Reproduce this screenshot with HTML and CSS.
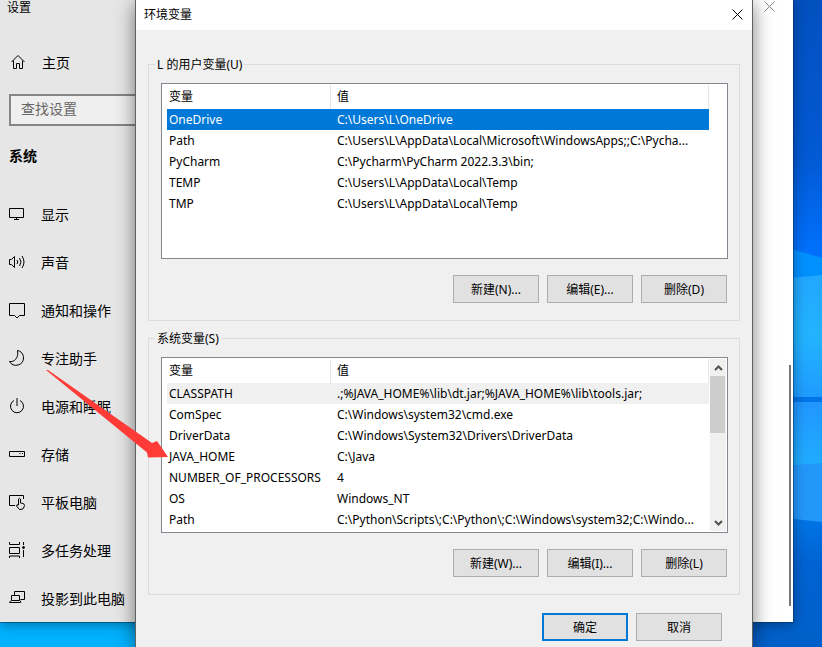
FILE: index.html
```
<!DOCTYPE html>
<html lang="zh-CN">
<head>
  <meta charset="UTF-8">
  <title>环境变量</title>
  <link rel="stylesheet" href="styles.css">
</head>
<body>
  <svg class="wallpaper" viewBox="0 0 822 647" preserveAspectRatio="xMaxYMin slice" aria-hidden="true">
    <defs>
      <linearGradient id="sky" x1="0" y1="0" x2="0" y2="1">
        <stop offset="0" stop-color="#0350bf"/>
        <stop offset=".6" stop-color="#0259d3"/>
        <stop offset="1" stop-color="#0072ff"/>
      </linearGradient>
      <linearGradient id="pane" x1="0" y1="0" x2="0" y2="1">
        <stop offset="0" stop-color="#22a6ff"/>
        <stop offset=".5" stop-color="#22b3ff"/>
        <stop offset="1" stop-color="#1f9bff"/>
      </linearGradient>
      <linearGradient id="pane2" x1="0" y1="0" x2="0" y2="1">
        <stop offset="0" stop-color="#2196ff"/>
        <stop offset="1" stop-color="#1fadff"/>
      </linearGradient>
      <linearGradient id="floor" x1="0" y1="0" x2="0" y2="1">
        <stop offset="0" stop-color="#0079ea"/>
        <stop offset=".4" stop-color="#0062d2"/>
        <stop offset="1" stop-color="#0060c9"/>
      </linearGradient>
    </defs>
    <rect width="822" height="260" fill="url(#sky)"/>
    <path d="M700 222L822 258V290H700z" fill="#0091ff"/>
    <path d="M700 286L822 275V397H700z" fill="url(#pane)"/>
    <rect y="397" width="822" height="5" fill="#0074e8"/>
    <rect x="700" y="402" width="122" height="66" fill="url(#pane2)"/>
    <path d="M700 472L822 463V530H700z" fill="#2497fb"/>
    <path d="M700 509L822 522V647H700z" fill="url(#floor)"/>
    <rect y="402" width="700" height="245" fill="#00b2ff"/>
  </svg>

  <div class="settings">
    <aside>
      <h1>设置</h1>
      <a class="home" href="#">
        <svg viewBox="0 0 18 18"><path d="M2.500 9L9 2.500l6.500 6.500M4.500 7.500v8h3v-5h3v5h3v-8"/></svg>
        主页
      </a>
      <input type="text" placeholder="查找设置" aria-label="查找设置">
      <h2>系统</h2>
      <nav>
        <a href="#"><svg viewBox="0 0 18 18"><path d="M1.500 3.500h14v9h-14zM8.500 12.500v2M6 14.500h5"/></svg>显示</a>
        <a href="#"><svg viewBox="0 0 18 18"><path d="M1.500 6.500h2l3-3v11l-3-3h-2zM9 7q1.500 2 0 4M11.500 5q3 4 0 8M14 3q4 6 0 12"/></svg>声音</a>
        <a href="#"><svg viewBox="0 0 18 18"><path d="M1.500 2.500h15v12h-5L9 17l-2.500-2.500h-5z"/></svg>通知和操作</a>
        <a href="#"><svg viewBox="0 0 18 18"><path d="M9.500 1.500C13 2 15.500 5 15.500 9a7.500 7.500 0 0 1-14 3.500C6 13.500 11 9 9.500 1.500z"/></svg>专注助手</a>
        <a href="#"><svg viewBox="0 0 18 18"><path d="M6 3.500a6.500 6.500 0 1 0 6 0M9 1v8"/></svg>电源和睡眠</a>
        <a href="#"><svg viewBox="0 0 18 18"><path d="M1.500 6.500h15v5h-15zM11.500 8.500h1M14 8.500h1"/></svg>存储</a>
        <a href="#"><svg viewBox="0 0 18 18"><path d="M7 12.500H1.500v-10h14V6M10.500 12V6q1-1.500 2 0v4l2.500.5q1.500.500 1.500 2-.5 4-3.500 4h-1.500L8.500 13q0-2 2-1"/></svg>平板电脑</a>
        <a href="#"><svg viewBox="0 0 18 18"><path d="M1.500 1v2.500h10V1M1.500 6.500h10v6h-10zM1.500 17v-2h10v2M15.500 1v3M15.500 9v7"/><circle cx="15.500" cy="6.500" r="1" fill="currentColor"/></svg>多任务处理</a>
        <a href="#"><svg viewBox="0 0 18 18"><path d="M6.500 6V2.500h10v8h-4M3.500 6.500h8v5h-8zM1.500 13.500h11M3 11.500l-1.500 2M12 11.500l1 2"/></svg>投影到此电脑</a>
      </nav>
    </aside>
    <main>
      <button class="close" aria-label="关闭设置"><svg viewBox="0 0 11 11"><path d="M.5.5l10 10M10.500.5l-10 10"/></svg></button>
      <div class="thumb"></div>
    </main>
  </div>

  <div class="dialog" role="dialog" aria-labelledby="title">
    <header>
      <span id="title">环境变量</span>
      <button class="close" aria-label="关闭"><svg viewBox="0 0 11 11"><path d="M.5.5l10 10M10.500.5l-10 10"/></svg></button>
    </header>

    <form>
      <fieldset>
        <legend>L 的用户变量(U)</legend>
        <div class="list">
          <div class="view">
            <table>
              <thead>
                <tr><th>变量</th><th>值</th></tr>
              </thead>
              <tbody>
                <tr class="selected"><td>OneDrive</td><td>C:\Users\L\OneDrive</td></tr>
                <tr><td>Path</td><td>C:\Users\L\AppData\Local\Microsoft\WindowsApps;;C:\Pycha...</td></tr>
                <tr><td>PyCharm</td><td>C:\Pycharm\PyCharm 2022.3.3\bin;</td></tr>
                <tr><td>TEMP</td><td>C:\Users\L\AppData\Local\Temp</td></tr>
                <tr><td>TMP</td><td>C:\Users\L\AppData\Local\Temp</td></tr>
              </tbody>
            </table>
          </div>
        </div>
        <div class="buttons">
          <button type="button">新建(N)...</button>
          <button type="button">编辑(E)...</button>
          <button type="button">删除(D)</button>
        </div>
      </fieldset>

      <fieldset>
        <legend>系统变量(S)</legend>
        <div class="list">
          <div class="view">
            <table>
              <thead>
                <tr><th>变量</th><th>值</th></tr>
              </thead>
              <tbody>
                <tr class="marked"><td>CLASSPATH</td><td>.;%JAVA_HOME%\lib\dt.jar;%JAVA_HOME%\lib\tools.jar;</td></tr>
                <tr><td>ComSpec</td><td>C:\Windows\system32\cmd.exe</td></tr>
                <tr><td>DriverData</td><td>C:\Windows\System32\Drivers\DriverData</td></tr>
                <tr><td>JAVA_HOME</td><td>C:\Java</td></tr>
                <tr><td>NUMBER_OF_PROCESSORS</td><td>4</td></tr>
                <tr><td>OS</td><td>Windows_NT</td></tr>
                <tr><td>Path</td><td>C:\Python\Scripts\;C:\Python\;C:\Windows\system32;C:\Windo...</td></tr>
              </tbody>
            </table>
          </div>
          <div class="scrollbar">
            <button type="button" aria-label="向上滚动"><svg viewBox="0 0 9 6"><path d="M1 5l3.500-3.500L8 5"/></svg></button>
            <div class="track"></div>
            <button type="button" aria-label="向下滚动"><svg viewBox="0 0 9 6"><path d="M1 1l3.500 3.500L8 1"/></svg></button>
          </div>
        </div>
        <div class="buttons">
          <button type="button">新建(W)...</button>
          <button type="button">编辑(I)...</button>
          <button type="button">删除(L)</button>
        </div>
      </fieldset>

      <div class="buttons actions">
        <button type="submit" class="default">确定</button>
        <button type="button">取消</button>
      </div>
    </form>
  </div>

  <svg class="arrow" viewBox="0 0 124 90" aria-hidden="true">
    <path d="M0 0l2 0L106 73l5-2 11 16-20 .5-1-5z"/>
  </svg>
</body>
</html>
```
FILE: styles.css
```
* {
  box-sizing: border-box;
  margin: 0;
  padding: 0;
}
html, body {
  height: 100%;
}
body {
  position: relative;
  overflow: hidden;
  font-family: "Noto Sans", "Noto Sans CJK SC", sans-serif;
  font-size: 12px;
  color: #000;
  background: #0060c9;
}
svg {
  display: block;
  fill: none;
  stroke: currentColor;
}
.wallpaper {
  position: absolute;
  width: 100%;
  height: 100%;
  stroke: none;
}

/* settings window */
.settings {
  position: absolute;
  top: 0;
  right: 29px;
  bottom: 25px;
  left: 0;
  display: flex;
  background: #fff;
  box-shadow: 0 0 0 1px rgba(0, 50, 90, .5), 0 2px 12px rgba(0, 0, 0, .4);
}
aside {
  flex: 0 0 320px;
  background: #e6e6e6;
  font-size: 14px;
}
aside h1 {
  height: 38px;
  padding-left: 7px;
  font-size: 12px;
  font-weight: normal;
  line-height: 16px;
}
aside a {
  display: flex;
  align-items: center;
  gap: 15px;
  height: 48px;
  padding-left: 8px;
  color: #000;
  text-decoration: none;
}
aside a svg {
  width: 18px;
  height: 18px;
}
aside a.home {
  padding-left: 9px;
}
aside input {
  display: block;
  width: 300px;
  height: 32px;
  margin: 8px 0 0 9px;
  padding: 0 10px 3px;
  border: 2px solid #868686;
  background: #efefef;
  font: inherit;
}
aside input::placeholder {
  color: #666;
}
aside h2 {
  height: 64px;
  padding-left: 9px;
  font-size: 14px;
  line-height: 60px;
}
main {
  flex: 1;
  display: flex;
  flex-direction: column;
  justify-content: space-between;
  align-items: flex-end;
  padding: 0 2px 16px 0;
}
.close {
  border: 0;
  background: none;
}
.close svg {
  width: 11px;
  height: 11px;
}
main .close {
  padding: 1px 16px;
  color: #888;
}
.thumb {
  width: 2px;
  height: 241px;
  background: #767676;
}

/* environment variables dialog */
.dialog {
  position: absolute;
  top: 0;
  right: 69px;
  left: 135px;
  min-height: 100%;
  border: solid #5f6265;
  border-width: 0 1px;
  background: #f0f0f0;
  box-shadow: 0 4px 18px rgba(0, 0, 0, .5);
}
header {
  display: flex;
  align-items: center;
  justify-content: space-between;
  height: 30px;
  padding: 0 9px 2px 8px;
  background: #fff;
}
form {
  padding: 25px 12px 6px;
}
fieldset {
  min-width: 0;
  margin-bottom: 8px;
  padding: 10px 11px 17px 12px;
  border: 1px solid #dcdcdc;
}
legend {
  padding: 1px 2px 0;
  margin-left: -6px;
  line-height: 17px;
}
.list {
  display: flex;
  height: 176px;
  padding: 1px 1px 0 5px;
  border: 1px solid #828790;
  background: #fff;
}
.view {
  flex: 1;
  min-width: 0;
  padding-right: 17px;
}
.view:not(:last-child) {
  padding-right: 1px;
}
table {
  width: 100%;
  border-collapse: separate;
  border-spacing: 0;
  table-layout: fixed;
}
th, td {
  padding-left: 6px;
  text-align: left;
  font-weight: normal;
  white-space: nowrap;
}
th:first-child, td:first-child {
  width: 164px;
  padding-left: 2px;
}
th {
  height: 24px;
  padding-bottom: 2px;
  border-right: 1px solid #e5e5e5;
}
td {
  height: 21px;
  line-height: 21px;
}
.selected {
  background: #0078d7;
  color: #fff;
}
.marked {
  background: #f0f0f0;
}
.scrollbar {
  display: flex;
  flex-direction: column;
  flex: 0 0 16px;
  margin-bottom: 1px;
  background: #f0f0f0;
}
.scrollbar button {
  display: flex;
  align-items: center;
  justify-content: center;
  height: 17px;
  border: 0;
  background: none;
  color: #505050;
}
.scrollbar svg {
  width: 9px;
  height: 6px;
  stroke-width: 2;
}
.track {
  flex: 1;
}
.track::before {
  content: "";
  display: block;
  width: 15px;
  height: 57px;
  background: #cdcdcd;
}
.buttons {
  display: flex;
  justify-content: flex-end;
  gap: 8px;
  margin-top: 16px;
  padding-right: 1px;
}
.buttons button {
  width: 86px;
  height: 28px;
  border: 1px solid #adadad;
  background: #e1e1e1;
  font: inherit;
}
.buttons .default {
  border: 2px solid #0078d7;
}
.actions {
  margin-top: 18px;
  padding-right: 18px;
}

/* pointer to JAVA_HOME */
.arrow {
  position: absolute;
  top: 370px;
  left: 46px;
  width: 124px;
  height: 90px;
  fill: #ff3b38;
  stroke: none;
  pointer-events: none;
}
```
